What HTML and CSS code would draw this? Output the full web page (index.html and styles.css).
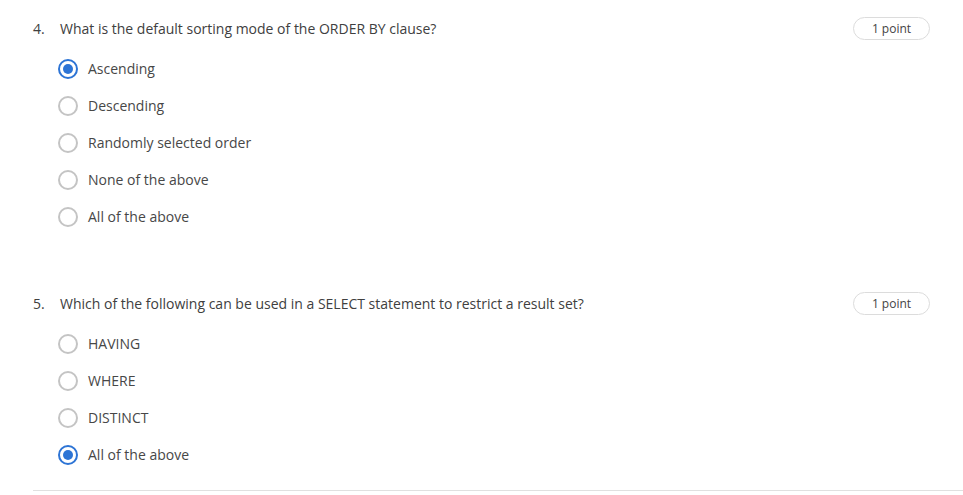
FILE: index.html
```html
<!DOCTYPE html>
<html>
<head>
<meta charset="utf-8">
<link rel="stylesheet" href="styles.css">
</head>
<body>
<div class="page">
  <section class="question">
    <div class="q-head">
      <span class="q-num">4.</span>
      <span class="q-text">What is the default sorting mode of the ORDER BY clause?</span>
      <span class="badge">1 point</span>
    </div>
    <ul class="options">
      <li class="option"><span class="radio checked"></span><span class="label">Ascending</span></li>
      <li class="option"><span class="radio"></span><span class="label">Descending</span></li>
      <li class="option"><span class="radio"></span><span class="label">Randomly selected order</span></li>
      <li class="option"><span class="radio"></span><span class="label">None of the above</span></li>
      <li class="option"><span class="radio"></span><span class="label">All of the above</span></li>
    </ul>
  </section>
  <section class="question second">
    <div class="q-head">
      <span class="q-num">5.</span>
      <span class="q-text">Which of the following can be used in a SELECT statement to restrict a result set?</span>
      <span class="badge">1 point</span>
    </div>
    <ul class="options">
      <li class="option"><span class="radio"></span><span class="label">HAVING</span></li>
      <li class="option"><span class="radio"></span><span class="label">WHERE</span></li>
      <li class="option"><span class="radio"></span><span class="label">DISTINCT</span></li>
      <li class="option"><span class="radio checked"></span><span class="label">All of the above</span></li>
    </ul>
  </section>
  <div class="divider"></div>
</div>
</body>
</html>
```
FILE: styles.css
```css
html, body {
  margin: 0;
  padding: 0;
  background: #ffffff;
}
body {
  font-family: "Open Sans", "Noto Sans", sans-serif;
  font-size: 14px;
  color: #404040;
}
.page {
  padding: 17px 0 0 33px;
  width: 963px;
  box-sizing: border-box;
}
.question {
  padding-right: 33px;
}
.question.second {
  margin-top: 57px;
}
.q-head {
  display: flex;
  align-items: center;
  height: 23px;
}
.q-num {
  width: 27px;
  flex: none;
}
.q-text {
  flex: 1;
}
.badge {
  flex: none;
  box-sizing: border-box;
  width: 77px;
  height: 23px;
  border: 1px solid #dcdcdc;
  border-radius: 12px;
  font-size: 12px;
  color: #444444;
  display: flex;
  align-items: center;
  justify-content: center;
}
.options {
  list-style: none;
  margin: 10px 0 0 0;
  padding: 0 0 0 25px;
}
.option {
  display: flex;
  align-items: center;
  height: 37px;
}
.radio {
  box-sizing: border-box;
  width: 20px;
  height: 20px;
  border: 2px solid #c4c4c4;
  border-radius: 50%;
  margin-right: 10px;
  flex: none;
  display: flex;
  align-items: center;
  justify-content: center;
}
.radio.checked {
  border-color: #2d74d5;
}
.radio.checked::after {
  content: "";
  width: 10px;
  height: 10px;
  border-radius: 50%;
  background: #2d74d5;
}
.label {
  color: #474747;
}
.divider {
  margin-top: 17px;
  height: 1px;
  background: #e0e0e0;
}
```
